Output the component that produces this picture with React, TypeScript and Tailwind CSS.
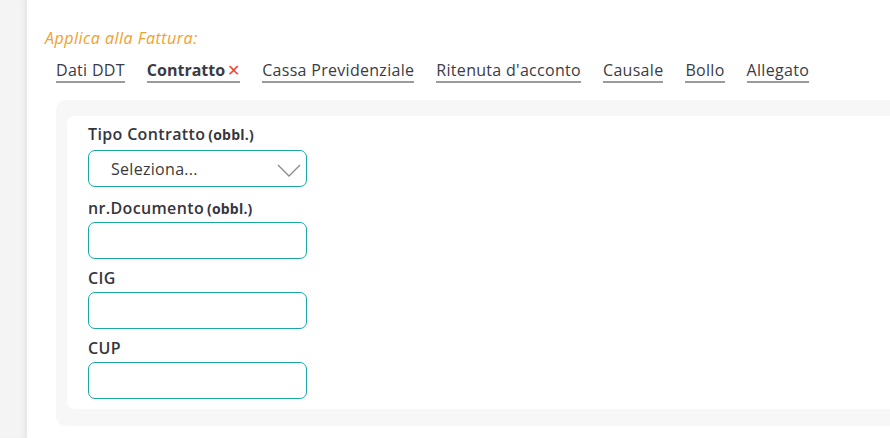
import React from "react";

const tabs = [
  { label: "Dati DDT" },
  { label: "Contratto", active: true },
  { label: "Cassa Previdenziale" },
  { label: "Ritenuta d'acconto" },
  { label: "Causale" },
  { label: "Bollo" },
  { label: "Allegato" },
];

function Field({ label, obbl, first, second, select }: { label: string; obbl?: boolean; first?: boolean; second?: boolean; select?: boolean }) {
  return (
    <div className={first ? "" : second ? "mt-[11px]" : "mt-[9px]"}>
      <div className="h-[20px] leading-[20px] text-[16px] font-semibold text-[#36363f] tracking-[0.35px]">
        {label}
        {obbl && <span className="text-[14px] font-bold ml-[3px] tracking-[0.2px]">(obbl.)</span>}
      </div>
      <div className={(first ? "mt-[6px] " : "mt-[4px] ") + "w-[219px] h-[37px] border border-[#1aa6a6] rounded-[7px] bg-white flex items-center justify-between"}>
        {select && (
          <>
            <span className="pl-[22px] text-[16px] tracking-[0.3px] text-[#3a3a3a]">Seleziona...</span>
            <svg width="24" height="14" viewBox="0 0 24 14" className="mr-[5px] mt-[4px]">
              <path d="M1 1 L12 12 L23 1" fill="none" stroke="#8a8a8a" strokeWidth="1.3" />
            </svg>
          </>
        )}
      </div>
    </div>
  );
}

export default function App() {
  return (
    <div className="flex w-[890px] h-[438px] overflow-hidden bg-white" style={{ fontFamily: '"Open Sans", "Noto Sans", sans-serif' }}>
      <div className="w-[27px] shrink-0 h-full bg-[#f4f4f4] shadow-[inset_-6px_0_6px_-4px_rgba(0,0,0,0.07)]" />
      <div className="flex-1 min-w-0 pt-[27px]">
        <div className="ml-[18px] italic text-[16px] tracking-[0.5px] text-[#f0a12c] leading-[22px]">Applica alla Fattura:</div>
        <div className="ml-[29px] mt-[11px] flex gap-[22px]">
          {tabs.map((t) => (
            <div key={t.label} className="border-b-[2px] border-[#9b9b9b] pb-[1px] leading-[20px] text-[16px] text-[#3b3b45] flex items-center">
              <span className={t.active ? "font-bold tracking-[0px]" : "tracking-[0.3px]"}>{t.label}</span>
              {t.active && <span className="ml-[2px] text-[#e8463c] text-[16px] leading-[20px]">✕</span>}
            </div>
          ))}
        </div>
        <div className="ml-[29px] mr-[-30px] mt-[17px] bg-[#f7f7f7] rounded-[10px] pt-[16px] pb-[17px] pl-[11px]">
          <div className="bg-white rounded-[8px] pt-[8px] pb-[10px] pl-[21px]">
            <Field label="Tipo Contratto" obbl first select />
            <Field label="nr.Documento" obbl second />
            <Field label="CIG" />
            <Field label="CUP" />
          </div>
        </div>
      </div>
    </div>
  );
}
